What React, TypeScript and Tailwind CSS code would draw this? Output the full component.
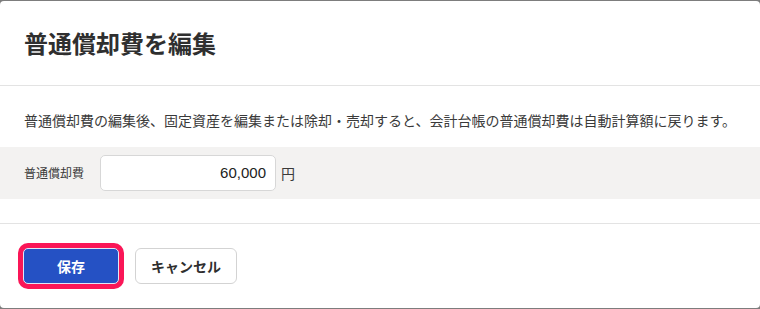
import React from "react";

const font = {
  fontFamily: '"Noto Sans CJK JP", "Noto Sans", "Liberation Sans", sans-serif',
};

export default function App() {
  return (
    <div className="h-[309px] w-[760px] bg-[#7d7d7d] pt-px" style={font}>
      <div className="flex h-[307px] flex-col overflow-hidden rounded-[4px] bg-white text-[#333333]">
        {/* ヘッダー */}
        <div className="flex h-[85px] items-center border-b border-[#e3e3e3] px-6">
          <h2 className="text-[24px] font-bold leading-none text-[#2f2f2f]">
            普通償却費を編集
          </h2>
        </div>

        {/* 本文 */}
        <p className="whitespace-nowrap px-6 pt-[24px] pb-[16px] text-[14px] leading-[21px] text-[#3a3a3a]">
          普通償却費の編集後、固定資産を編集または除却・売却すると、会計台帳の普通償却費は自動計算額に戻ります。
        </p>

        <div className="flex h-[52px] items-center bg-[#f3f2f1] px-6">
          <span className="w-[76px] text-[12px] text-[#3a3a3a]">普通償却費</span>
          <div
            className="flex h-[36px] w-[176px] items-center justify-end rounded-[5px] border border-[#d7d7d7] bg-white px-[9px] text-[15px] text-[#222222]"
            style={{ fontFamily: '"Liberation Sans", "Noto Sans", sans-serif' }}
          >
            60,000
          </div>
          <span className="ml-[5px] text-[14px] text-[#3a3a3a]">円</span>
        </div>

        <div className="mt-[24px] border-t border-[#e3e3e3]" />

        {/* フッター */}
        <div className="flex items-center gap-4 px-[23px] pt-[24px]">
          <button className="h-[36px] w-[96px] rounded-[5px] border border-[#dfe6f7] bg-[#2551c4] text-[14px] font-bold text-white shadow-[0_0_0_5px_#fa1657]">
            保存
          </button>
          <button className="h-[36px] w-[102px] rounded-[6px] border border-[#d3d3d3] bg-white text-[14px] font-bold text-[#2f2f2f]">
            キャンセル
          </button>
        </div>
      </div>
    </div>
  );
}
